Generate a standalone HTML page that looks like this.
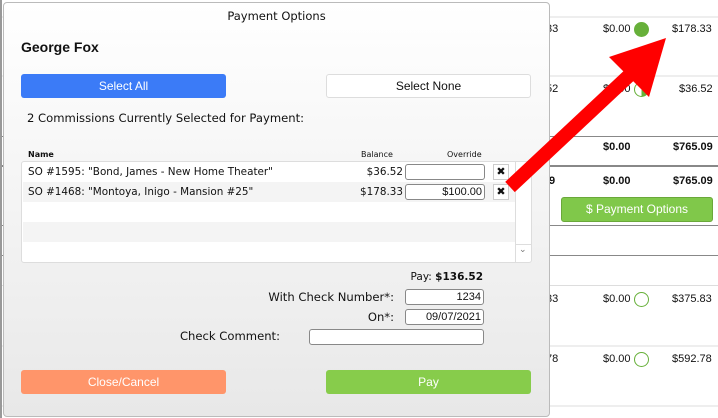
<!DOCTYPE html>
<html><head><style>
*{box-sizing:border-box;margin:0;padding:0}
body{width:718px;height:418px;overflow:hidden;background:#fff;font-family:"DejaVu Sans","Liberation Sans",sans-serif;position:relative;color:#111}
.a{position:absolute}
.bg{font-family:"Liberation Sans",sans-serif;font-size:11px}
.ln{position:absolute;left:0;width:718px;height:1px}
.circ{position:absolute;width:15px;height:15px;border-radius:50%;border:1.5px solid #67b03a}
.modal{position:absolute;left:3px;top:2px;width:547px;height:415px;border:1px solid #bbb;border-radius:4px;background:linear-gradient(#fff,#e8e8e8)}
.btn{position:absolute;height:24px;border-radius:3px;color:#fff;font-family:"Liberation Sans",sans-serif;font-size:12px;text-align:center;line-height:24px}
.inp{position:absolute;height:16px;border:1px solid #888;border-radius:3px;background:#fff;font-size:11px;text-align:right;padding-right:2px;line-height:14px;font-family:"Liberation Sans",sans-serif}
.lbl{position:absolute;font-size:11.6px;text-align:right}
.row{position:absolute;left:1px;width:492px;height:20px;font-size:10.4px;line-height:20px}
.x{position:absolute;width:16px;height:16px;border:1px solid #ccc;background:#fff;font-size:11px;text-align:center;line-height:14px;font-weight:bold}
</style></head><body>
<div class="bg">
<div class="ln" style="top:16px;background:#eee;height:2px"></div>
<div class="ln" style="top:75px;background:#eee;height:2px"></div>
<div class="ln" style="top:136px;background:#888"></div>
<div class="ln" style="top:165px;background:#888;height:2px"></div>
<div class="ln" style="top:225px;background:#888"></div>
<div class="ln" style="top:255px;background:#888"></div>
<div class="ln" style="top:285px;background:#ddd"></div>
<div class="ln" style="top:345px;background:#eee;height:2px"></div>
<div class="ln" style="top:405px;background:#eee;height:2px"></div>
<div class="a" style="left:546px;top:23px">33</div>
<div class="a" style="left:603px;top:23px">$0.00</div>
<div class="circ" style="left:634px;top:22px;background:#67b03a"></div>
<div class="a" style="left:672px;top:23px">$178.33</div>
<div class="a" style="left:546px;top:83px">52</div>
<div class="a" style="left:603px;top:83px">$0.00</div>
<div class="circ" style="left:634px;top:82px;background:linear-gradient(90deg,#fff 50%,#67b03a 50%)"></div>
<div class="a" style="left:679px;top:83px">$36.52</div>
<div class="a" style="left:603px;top:141px;font-weight:bold">$0.00</div>
<div class="a" style="left:673px;top:141px;font-weight:bold">$765.09</div>
<div class="a" style="left:549px;top:175px;font-weight:bold">9</div>
<div class="a" style="left:603px;top:175px;font-weight:bold">$0.00</div>
<div class="a" style="left:673px;top:175px;font-weight:bold">$765.09</div>
<div class="btn" style="left:561px;top:197px;width:152px;height:25px;background:#80c84a;border:1px solid #6aa83a;font-size:12px;line-height:23px">$ Payment Options</div>
<div class="a" style="left:546px;top:293px">33</div>
<div class="a" style="left:603px;top:293px">$0.00</div>
<div class="circ" style="left:634px;top:292px"></div>
<div class="a" style="left:672px;top:293px">$375.83</div>
<div class="a" style="left:546px;top:353px">78</div>
<div class="a" style="left:603px;top:353px">$0.00</div>
<div class="circ" style="left:634px;top:352px"></div>
<div class="a" style="left:672px;top:353px">$592.78</div>
<div class="a" style="left:0;top:0;width:2px;height:418px;background:#999"></div>
</div>

<div class="modal">
<div class="a" style="left:0;width:545px;top:6px;text-align:center;font-size:11.5px">Payment Options</div>
<div class="a" style="left:17px;top:36px;font-family:'Liberation Sans',sans-serif;font-weight:bold;font-size:14px">George Fox</div>
<div class="btn" style="left:17px;top:71px;width:205px;background:#3b7bf7">Select All</div>
<div class="btn" style="left:322px;top:71px;width:205px;background:#fff;border:1px solid #ddd;color:#111;line-height:22px">Select None</div>
<div class="a" style="left:23px;top:108px;font-size:11.6px">2 Commissions Currently Selected for Payment:</div>
<div class="a" style="left:24px;top:147px;font-size:8px;font-weight:bold">Name</div>
<div class="a" style="left:357px;top:147px;font-size:8px">Balance</div>
<div class="a" style="left:443px;top:147px;font-size:8px">Override</div>
<div class="a" style="left:17px;top:158px;width:511px;height:102px;border:1px solid #ddd;border-radius:3px;background:#fff;overflow:hidden">
 <div class="row" style="top:0;padding-left:5px">SO #1595: "Bond, James - New Home Theater"<span class="a" style="right:112px;top:0">$36.52</span></div>
 <div class="row" style="top:20px;background:#f4f4f4;padding-left:5px">SO #1468: "Montoya, Inigo - Mansion #25"<span class="a" style="right:112px;top:0">$178.33</span></div>
 <div class="row" style="top:60px;background:#f4f4f4"></div>
 <div class="inp" style="left:383px;top:2px;width:80px"></div>
 <div class="inp" style="left:383px;top:22px;width:80px">$100.00</div>
 <div class="x" style="left:471px;top:2px">✖</div>
 <div class="x" style="left:471px;top:22px">✖</div>
 <div class="a" style="left:493px;top:0;width:1px;height:102px;background:#ddd"></div>
 <div class="a" style="left:494px;top:82px;width:16px;height:1px;background:#ddd"></div>
 <div class="a" style="left:497px;top:83px;font-size:9px;color:#777">⌄</div>
</div>
<div class="lbl" style="right:66px;top:268px;font-size:10.5px">Pay: <b>$136.52</b></div>
<div class="lbl" style="right:155px;top:287px">With Check Number*:</div>
<div class="inp" style="left:401px;top:286px;width:79px">1234</div>
<div class="lbl" style="right:155px;top:307px">On*:</div>
<div class="inp" style="left:401px;top:306px;width:79px">09/07/2021</div>
<div class="lbl" style="right:269px;top:326px">Check Comment:</div>
<div class="inp" style="left:305px;top:326px;width:175px"></div>
<div class="btn" style="left:17px;top:367px;width:205px;background:#ff956a">Close/Cancel</div>
<div class="btn" style="left:322px;top:367px;width:205px;background:#87cc4b">Pay</div>
</div>

<svg class="a" style="left:0;top:0" width="718" height="418">
<line x1="510" y1="187" x2="635" y2="70" stroke="#ff0000" stroke-width="14"/>
<polygon points="666,38 609,57 649,97" fill="#ff0000"/>
</svg>
</body></html>
